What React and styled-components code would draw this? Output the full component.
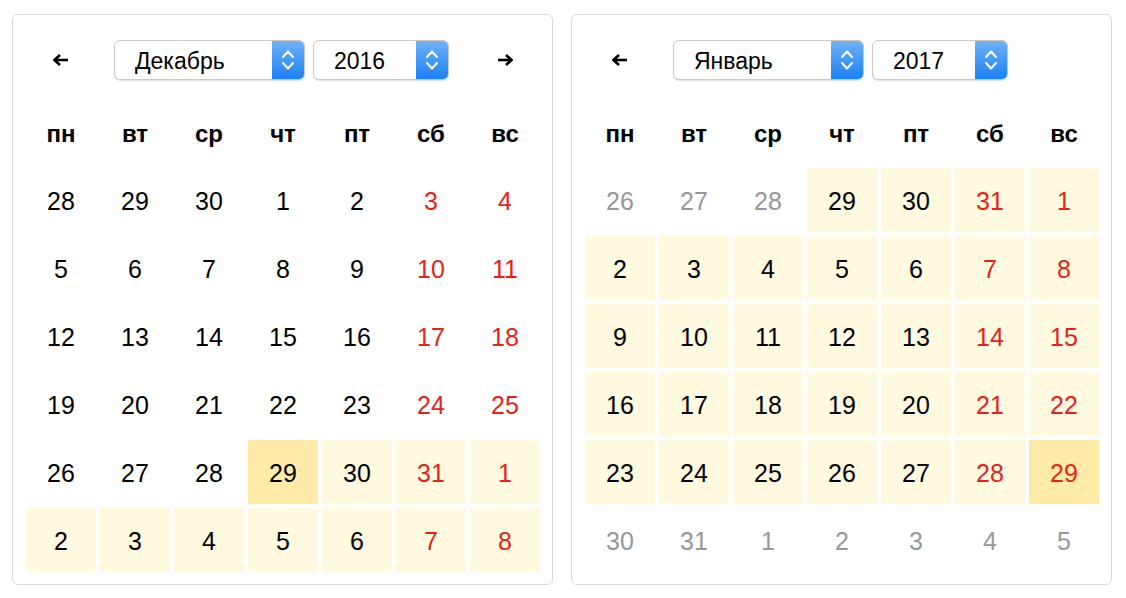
import React from "react";
import styled, { createGlobalStyle } from "styled-components";

const GlobalStyle = createGlobalStyle`
  html, body { margin: 0; padding: 0; background: #fff; }
  body { font-family: "Liberation Sans", Arial, sans-serif; color: #000; }
`;

const Page = styled.div`
  display: flex;
  gap: 18px;
  padding: 14px 12px;
`;

const Panel = styled.section`
  box-sizing: border-box;
  width: 541px;
  height: 571px;
  border: 1px solid #d9d9d9;
  border-radius: 6px;
  padding: 25px 12px 12px 13px;
  display: flex;
  flex-direction: column;
`;

const Grid7 = styled.div`
  display: grid;
  grid-template-columns: repeat(7, 70px);
  column-gap: 4px;
`;

const Nav = styled(Grid7)`
  height: 40px;
  align-items: center;
`;

const ArrowBtn = styled.button`
  border: 0;
  background: none;
  padding: 0;
  display: flex;
  justify-content: center;
  align-items: center;
  grid-column: ${(p) => p.$col};
  cursor: pointer;
`;

const Selects = styled.div`
  grid-column: 2 / 7;
  display: flex;
  justify-content: center;
  gap: 8px;
  height: 40px;
  margin-left: -3px;
`;

const SelectBox = styled.div`
  box-sizing: border-box;
  width: ${(p) => p.$w}px;
  height: 40px;
  display: flex;
  border: 1px solid #c9c9c9;
  border-radius: 6px;
  box-shadow: 0 1px 1px rgba(0, 0, 0, 0.12);
  background: #fff;
  overflow: hidden;
`;

const SelectLabel = styled.span`
  flex: 1;
  display: flex;
  align-items: center;
  padding: 2px 0 0 20px;
  font-size: 23px;
`;

const Stepper = styled.span`
  width: 32px;
  display: flex;
  align-items: center;
  justify-content: center;
  background: linear-gradient(#6fb3fa, #1b7ff6);
`;

const WeekRow = styled(Grid7)`
  margin-top: 30px;
  height: 48px;
  align-items: center;
`;

const WeekDay = styled.div`
  text-align: center;
  font-weight: 700;
  font-size: 24px;
`;

const Days = styled(Grid7)`
  margin-top: 10px;
  grid-auto-rows: 64px;
  row-gap: 4px;
`;

const toneColor = { ink: "#000", red: "#e3241d", gray: "#979797" };
const bgColor = { none: "transparent", range: "#fef9df", sel: "#fdeba7" };

const Day = styled.div`
  display: flex;
  align-items: center;
  justify-content: center;
  padding-top: 3px;
  font-size: 25px;
  color: ${(p) => toneColor[p.$tone]};
  background: ${(p) => bgColor[p.$bg]};
`;

const LeftArrow = () => (
  <svg width="16" height="12" viewBox="0 0 16 12">
    <path d="M15 6H3" stroke="#000" strokeWidth="2.6" />
    <path d="M7 1L1.5 6L7 11" stroke="#000" strokeWidth="2.6" fill="none" />
  </svg>
);

const RightArrow = () => (
  <svg width="16" height="12" viewBox="0 0 16 12">
    <path d="M1 6H13" stroke="#000" strokeWidth="2.6" />
    <path d="M9 1L14.5 6L9 11" stroke="#000" strokeWidth="2.6" fill="none" />
  </svg>
);

const Chevrons = () => (
  <svg width="14" height="26" viewBox="0 0 14 26">
    <path d="M2 10L7 4.5L12 10" stroke="#fff" strokeWidth="2" fill="none" strokeLinecap="round" strokeLinejoin="round" />
    <path d="M2 16L7 21.5L12 16" stroke="#fff" strokeWidth="2" fill="none" strokeLinecap="round" strokeLinejoin="round" />
  </svg>
);

const Select = ({ value, width }) => (
  <SelectBox $w={width}>
    <SelectLabel>{value}</SelectLabel>
    <Stepper>
      <Chevrons />
    </Stepper>
  </SelectBox>
);

const weekdays = ["пн", "вт", "ср", "чт", "пт", "сб", "вс"];

const seq = (a, b) => Array.from({ length: b - a + 1 }, (_, i) => a + i);

// December 2016
const decNums = [28, 29, 30, ...seq(1, 31), ...seq(1, 8)];
const decCells = decNums.map((n, i) => {
  const col = i % 7;
  let bg = "none";
  if (i === 31) bg = "sel";
  else if (i > 31) bg = "range";
  return { n, tone: col >= 5 ? "red" : "ink", bg };
});

// January 2017
const janNums = [26, 27, 28, 29, 30, 31, ...seq(1, 31), ...seq(1, 5)];
const janCells = janNums.map((n, i) => {
  const col = i % 7;
  if (i < 3 || i > 34) return { n, tone: "gray", bg: "none" };
  return { n, tone: col >= 5 ? "red" : "ink", bg: i === 34 ? "sel" : "range" };
});

const Calendar = ({ month, year, cells, showNext }) => (
  <Panel>
    <Nav>
      <ArrowBtn $col={1} aria-label="Предыдущий месяц">
        <LeftArrow />
      </ArrowBtn>
      <Selects>
        <Select value={month} width={191} />
        <Select value={year} width={136} />
      </Selects>
      {showNext && (
        <ArrowBtn $col={7} aria-label="Следующий месяц">
          <RightArrow />
        </ArrowBtn>
      )}
    </Nav>
    <WeekRow>
      {weekdays.map((w) => (
        <WeekDay key={w}>{w}</WeekDay>
      ))}
    </WeekRow>
    <Days>
      {cells.map((c, i) => (
        <Day key={i} $tone={c.tone} $bg={c.bg}>
          {c.n}
        </Day>
      ))}
    </Days>
  </Panel>
);

export default function App() {
  return (
    <>
      <GlobalStyle />
      <Page>
        <Calendar month="Декабрь" year="2016" cells={decCells} showNext />
        <Calendar month="Январь" year="2017" cells={janCells} />
      </Page>
    </>
  );
}
